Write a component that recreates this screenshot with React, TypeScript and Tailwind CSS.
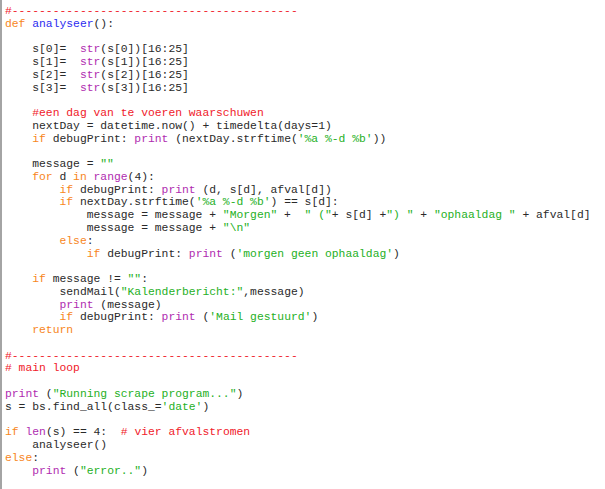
const tone: Record<string, string> = {
  t: "text-[#2a2a2a]",
  c: "text-[#f0202a]",
  k: "text-[#f7861c]",
  f: "text-[#2b2bf0]",
  b: "text-[#b02cb0]",
  s: "text-[#25b025]",
};

// each line is a list of [tone, text] pairs
type Tok = [string, string];

const dashes = "#" + "-".repeat(42);

const lines: Tok[][] = [
  [["c", dashes]],
  [["k", "def "], ["f", "analyseer"], ["t", "():"]],
  [],
  [["t", "    s[0]=  "], ["b", "str"], ["t", "(s[0])[16:25]"]],
  [["t", "    s[1]=  "], ["b", "str"], ["t", "(s[1])[16:25]"]],
  [["t", "    s[2]=  "], ["b", "str"], ["t", "(s[2])[16:25]"]],
  [["t", "    s[3]=  "], ["b", "str"], ["t", "(s[3])[16:25]"]],
  [],
  [["t", "    "], ["c", "#een dag van te voeren waarschuwen"]],
  [["t", "    nextDay = datetime.now() + timedelta(days=1)"]],
  [["t", "    "], ["k", "if"], ["t", " debugPrint: "], ["b", "print"], ["t", " (nextDay.strftime("], ["s", "'%a %-d %b'"], ["t", "))"]],
  [],
  [["t", "    message = "], ["s", '""']],
  [["t", "    "], ["k", "for"], ["t", " d "], ["k", "in"], ["t", " "], ["b", "range"], ["t", "(4):"]],
  [["t", "        "], ["k", "if"], ["t", " debugPrint: "], ["b", "print"], ["t", " (d, s[d], afval[d])"]],
  [["t", "        "], ["k", "if"], ["t", " nextDay.strftime("], ["s", "'%a %-d %b'"], ["t", ") == s[d]:"]],
  [["t", "            message = message + "], ["s", '"Morgen"'], ["t", " +  "], ["s", '" ("'], ["t", "+ s[d] +"], ["s", '") "'], ["t", " + "], ["s", '"ophaaldag "'], ["t", " + afval[d]"]],
  [["t", "            message = message + "], ["s", '"\\n"']],
  [["t", "        "], ["k", "else"], ["t", ":"]],
  [["t", "            "], ["k", "if"], ["t", " debugPrint: "], ["b", "print"], ["t", " ("], ["s", "'morgen geen ophaaldag'"], ["t", ")"]],
  [],
  [["t", "    "], ["k", "if"], ["t", " message != "], ["s", '""'], ["t", ":"]],
  [["t", "        sendMail("], ["s", '"Kalenderbericht:"'], ["t", ",message)"]],
  [["t", "        "], ["b", "print"], ["t", " (message)"]],
  [["t", "        "], ["k", "if"], ["t", " debugPrint: "], ["b", "print"], ["t", " ("], ["s", "'Mail gestuurd'"], ["t", ")"]],
  [["t", "    "], ["k", "return"]],
  [],
  [["c", dashes]],
  [["c", "# main loop"]],
  [],
  [["b", "print"], ["t", " ("], ["s", '"Running scrape program..."'], ["t", ")"]],
  [["t", "s = bs.find_all(class_="], ["s", "'date'"], ["t", ")"]],
  [],
  [["k", "if"], ["t", " "], ["b", "len"], ["t", "(s) == 4:  "], ["c", "# vier afvalstromen"]],
  [["t", "    analyseer()"]],
  [["k", "else"], ["t", ":"]],
  [["t", "    "], ["b", "print"], ["t", " ("], ["s", '"error.."'], ["t", ")"]],
];

export default function App() {
  return (
    <div className="w-[605px] h-[489px] bg-white flex overflow-hidden">
      <div className="w-[2px] h-full bg-[#a4a4a4]" />
      <pre className="pl-[3px] pt-[5px] m-0 text-[11.35px] leading-[12.77px] font-['Liberation_Mono',monospace] whitespace-pre">
        {lines.map((line, i) => (
          <div key={i} className="h-[12.77px]">
            {line.map(([k, txt], j) => (
              <span key={j} className={tone[k]}>
                {txt}
              </span>
            ))}
          </div>
        ))}
      </pre>
    </div>
  );
}
